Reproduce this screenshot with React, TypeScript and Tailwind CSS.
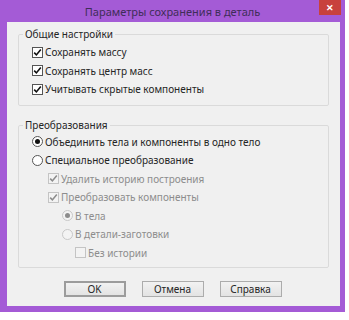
import React from 'react';

const font = { fontFamily: '"Noto Sans", "Open Sans", sans-serif' };

const Check: React.FC<{ disabled?: boolean; checked?: boolean }> = ({ disabled, checked = true }) => (
  <span
    className={`w-[11px] h-[11px] border flex items-center justify-center shrink-0 ${
      disabled ? 'border-[#c4c4c4] bg-[#f3f3f3]' : 'border-[#555] bg-white'
    }`}
  >
    {checked && (
      <svg width="9" height="9" viewBox="0 0 9 9">
        <path
          d="M1.2 4.6 L3.4 6.9 L7.8 1.6"
          fill="none"
          stroke={disabled ? '#8c8c8c' : '#111'}
          strokeWidth="1.6"
        />
      </svg>
    )}
  </span>
);

const Radio: React.FC<{ disabled?: boolean; checked?: boolean }> = ({ disabled, checked }) => (
  <span
    className={`w-[11px] h-[11px] rounded-full border flex items-center justify-center shrink-0 ${
      disabled ? 'border-[#c8c8c8] bg-[#f3f3f3]' : 'border-[#555] bg-white'
    }`}
  >
    {checked && (
      <span className={`w-[5px] h-[5px] rounded-full ${disabled ? 'bg-[#8c8c8c]' : 'bg-[#111]'}`} />
    )}
  </span>
);

const Row: React.FC<{ indent: string; disabled?: boolean; children: React.ReactNode; label: string }> = ({
  indent,
  disabled,
  children,
  label,
}) => (
  <div className={`flex items-center gap-[2px] h-[18.5px] ${indent}`}>
    {children}
    <span className={`text-[10px] leading-none ${disabled ? 'text-[#8d8d8d]' : 'text-[#262626]'}`}>{label}</span>
  </div>
);

const Button: React.FC<{ label: string; def?: boolean }> = ({ label, def }) => (
  <div
    className={`w-[62px] h-[16px] flex items-center justify-center text-[10px] text-[#262626] bg-gradient-to-b from-[#f2f2f2] to-[#e3e3e3] ${
      def ? 'border-2 border-[#9c9c9c]' : 'border border-[#acacac]'
    }`}
  >
    {label}
  </div>
);

export default function App() {
  return (
    <div className="w-[349px] h-[320px] bg-white" style={font}>
      <div className="w-[345px] h-[312px] bg-[#a45bd6] flex flex-col">
        {/* title bar */}
        <div className="relative h-[22px] flex items-center justify-center">
          <span className="text-[11px] text-[#3f2d58] leading-none">Параметры сохранения в деталь</span>
          <div className="absolute right-[4px] top-0 w-[22px] h-[15px] bg-[#c8413c] flex items-center justify-center text-white text-[9px] font-bold leading-none">
            ✕
          </div>
        </div>

        {/* client area */}
        <div className="flex-1 ml-[7px] mr-[5px] mb-[6px] bg-[#f0f0f0] pt-[5px] px-[11px] flex flex-col">
          <fieldset className="border border-[#dadada] rounded-[2px] pt-[1px] pb-[6px]">
            <legend className="ml-[4px] px-[2px] text-[10px] leading-[15px] text-[#262626]">Общие настройки</legend>
            <Row indent="pl-[13px]" label="Сохранять массу">
              <Check />
            </Row>
            <Row indent="pl-[13px]" label="Сохранять центр масс">
              <Check />
            </Row>
            <Row indent="pl-[13px]" label="Учитывать скрытые компоненты">
              <Check />
            </Row>
          </fieldset>

          <fieldset className="mt-[12px] border border-[#dadada] rounded-[2px] pb-[5px]">
            <legend className="ml-[4px] px-[2px] text-[10px] leading-[15px] text-[#262626]">Преобразования</legend>
            <Row indent="pl-[13px]" label="Объединить тела и компоненты в одно тело">
              <Radio checked />
            </Row>
            <Row indent="pl-[13px]" label="Специальное преобразование">
              <Radio />
            </Row>
            <Row indent="pl-[29px]" disabled label="Удалить историю построения">
              <Check disabled />
            </Row>
            <Row indent="pl-[29px]" disabled label="Преобразовать компоненты">
              <Check disabled />
            </Row>
            <Row indent="pl-[43px]" disabled label="В тела">
              <Radio disabled checked />
            </Row>
            <Row indent="pl-[43px]" disabled label="В детали-заготовки">
              <Radio disabled />
            </Row>
            <Row indent="pl-[56px]" disabled label="Без истории">
              <Check disabled checked={false} />
            </Row>
          </fieldset>

          <div className="mt-[13px] flex justify-center gap-[16px] mr-[2px]">
            <Button label="OK" def />
            <Button label="Отмена" />
            <Button label="Справка" />
          </div>
        </div>
      </div>
    </div>
  );
}
